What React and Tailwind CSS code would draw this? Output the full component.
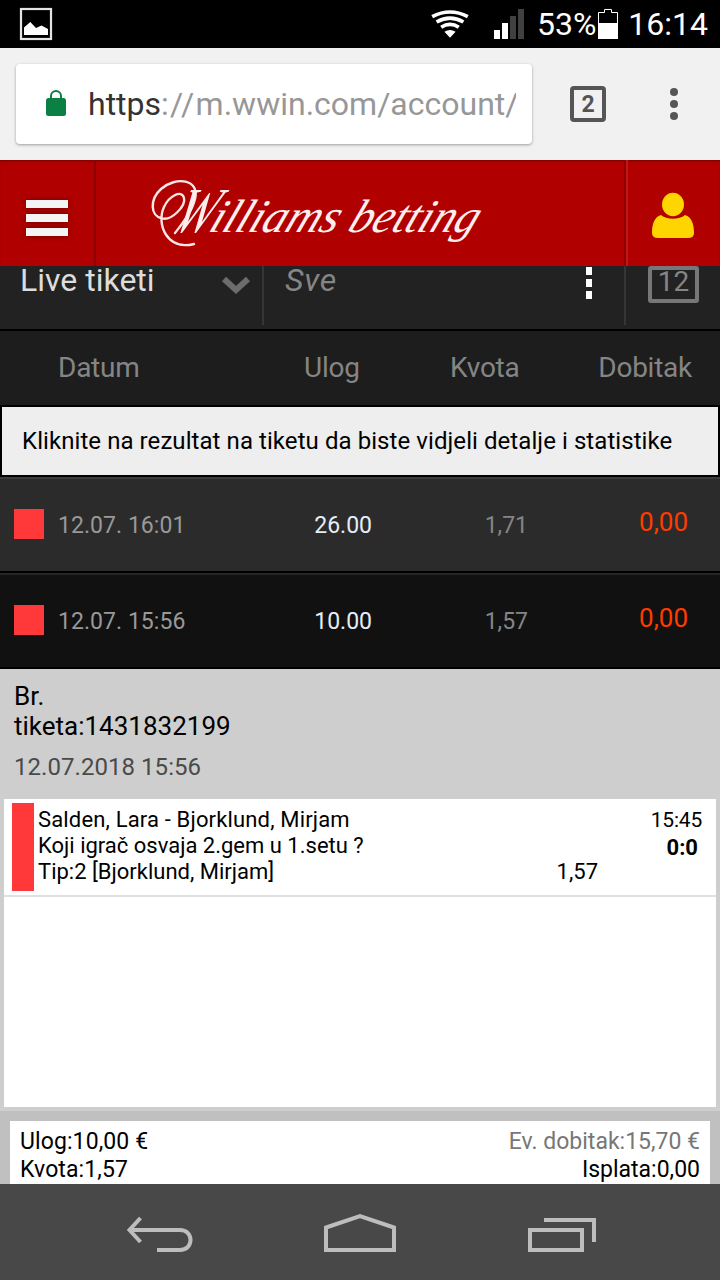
import React from 'react'

const tickets = [
  { id: 1, date: '12.07. 16:01', stake: '26.00', odds: '1,71', payout: '0,00', open: false },
  { id: 2, date: '12.07. 15:56', stake: '10.00', odds: '1,57', payout: '0,00', open: true },
]

const GalleryIcon = () => (
  <svg width="34" height="34" viewBox="0 0 34 34" fill="none">
    <rect x="2" y="2" width="30" height="30" stroke="#e4e4e4" strokeWidth="2.2" />
    <path d="M5 28V20.5L11.3 15L17 21L22.5 18.5L29 22V28Z" fill="#fff" />
  </svg>
)

const WifiIcon = () => (
  <svg width="38" height="28" viewBox="0 0 38 28" fill="none" stroke="#fff" strokeWidth="3.7">
    <path d="M1.2 6.6Q19 -2.6 36.8 6.6" />
    <path d="M5.6 12Q19 4.4 32.4 12" />
    <path d="M10.2 17.2Q19 11.6 27.8 17.2" />
    <path d="M13.4 21.8Q19 18.4 24.6 21.8L19 27.8Z" fill="#fff" stroke="none" />
  </svg>
)

const SignalIcon = () => (
  <svg width="30" height="30" viewBox="0 0 30 30">
    <rect x="0" y="21" width="6" height="9" fill="#fff" />
    <rect x="8" y="14" width="6" height="16" fill="#fff" />
    <rect x="16" y="7" width="6" height="23" fill="#404040" />
    <rect x="24" y="0" width="6" height="30" fill="#404040" />
  </svg>
)

const BatteryIcon = () => (
  <svg width="20" height="30" viewBox="0 0 20 30" fill="none">
    <path d="M.5 29.5V3.5H6.5V.5H13.5V3.5H19.5V29.5Z" stroke="#fff" />
    <rect x="0" y="14" width="20" height="16" fill="#fff" />
  </svg>
)

const LockIcon = () => (
  <svg width="20" height="26" viewBox="0 0 20 26" fill="none">
    <path d="M5 9V6A5 5 0 0 1 15 6V9" stroke="#0b8043" strokeWidth="2" />
    <rect x="0" y="8" width="20" height="18" rx="2.5" fill="#0b8043" />
  </svg>
)

const Logo = () => (
  <svg width="380" height="96" viewBox="0 -6 380 96" fill="none">
    {/* swash around the initial */}
    <path
      d="M12 42C22 46 37 30 35 22C33 13 20 20 15 31C7 48 18 75 45 68M12 42C2 40 0 24 12 13C27 0 51 3 46 23C43 36 33 48 26 57"
      stroke="#fbe4e4" strokeWidth="2.4" strokeLinecap="round"
    />
    <g
      transform="translate(30 56) skewX(-22)" fill="#fdeeee"
      fontFamily="'Liberation Serif', serif" fontStyle="italic"
    >
      <text x="-8" y="0" fontSize="64" textLength="38" lengthAdjust="spacingAndGlyphs">W</text>
      <text x="28" y="0" fontSize="47" textLength="128" lengthAdjust="spacingAndGlyphs">illiams</text>
      <text x="167" y="0" fontSize="47" textLength="128" lengthAdjust="spacingAndGlyphs">betting</text>
    </g>
  </svg>
)

const UserIcon = () => (
  <svg width="44" height="48" viewBox="0 0 44 48" fill="#ffd500">
    <path d="M10 23C3 25 1 33 1 41Q1 46 7 46H37Q43 46 43 41C43 33 41 25 34 23C28 28 16 28 10 23Z" />
    <ellipse cx="22" cy="12.5" rx="11" ry="11.7" />
  </svg>
)

const ChevronIcon = () => (
  <svg width="30" height="20" viewBox="0 0 30 20" fill="none">
    <path d="M3 3L15 14L27 3" stroke="#6c6c6c" strokeWidth="6" />
  </svg>
)

function StatusBar() {
  return (
    <div className="flex h-12 items-center bg-black pl-[19px] pr-3 text-white">
      <GalleryIcon />
      <div className="ml-auto flex items-center">
        <WifiIcon />
        <div className="ml-[25px]"><SignalIcon /></div>
        <span className="ml-[13px] text-[32px] leading-none">53%</span>
        <div className="ml-0.5"><BatteryIcon /></div>
        <span className="ml-2.5 text-[32px] leading-none">16:14</span>
      </div>
    </div>
  )
}

function BrowserBar() {
  return (
    <div className="flex h-28 items-center bg-[#f1f1f1] pl-4">
      <div className="flex h-20 w-[516px] items-center rounded-[4px] bg-white pl-[30px] pr-4 shadow-[0_1px_3px_rgba(0,0,0,0.35)]">
        <div className="-mt-0.5"><LockIcon /></div>
        <div className="ml-[22px] w-[428px] overflow-hidden whitespace-nowrap text-[32px] leading-10 text-[#979797]">
          <span className="text-[#333]">https</span>
          <span className="tracking-[1.3px]">://</span>m.wwin.com/account/
        </div>
      </div>
      <div className="ml-[38px] flex size-9 items-center justify-center rounded-[4px] border-4 border-[#555] text-[23px] font-bold leading-none text-[#555]">
        2
      </div>
      <div className="ml-16 flex flex-col gap-1">
        <i className="size-2 rounded-full bg-[#555]" />
        <i className="size-2 rounded-full bg-[#555]" />
        <i className="size-2 rounded-full bg-[#555]" />
      </div>
    </div>
  )
}

function SiteHeader() {
  return (
    <div className="flex h-[106px] bg-[#b00000] shadow-[inset_0_2px_2px_-1px_rgba(90,0,0,0.6)]">
      <div className="flex w-24 flex-col gap-1.5 border-r-2 border-[#8c0000] pl-[26px] pt-10">
        <i className="h-2 w-[42px] bg-[#f4f4f4] shadow-[0_0_5px_rgba(70,0,0,0.7)]" />
        <i className="h-2 w-[42px] bg-[#f4f4f4] shadow-[0_0_5px_rgba(70,0,0,0.7)]" />
        <i className="h-2 w-[42px] bg-[#f4f4f4] shadow-[0_0_5px_rgba(70,0,0,0.7)]" />
      </div>
      <div className="flex-1 pl-[53px] pt-2.5"><Logo /></div>
      <div className="w-24 border-l-2 border-[#8c0000]">
        <div className="h-full border-l-2 border-[#c81414] pl-[23px] pt-8"><UserIcon /></div>
      </div>
    </div>
  )
}

function FilterBar() {
  return (
    <div className="flex h-[65px] border-b-2 border-black bg-[#222] text-[32px] leading-8">
      <div className="flex h-[59px] w-[264px] justify-between border-r-2 border-[#363636] pl-5 pr-[11px]">
        <span className="-mt-0.5 text-[#ddd]">Live tiketi</span>
        <div className="pt-2.5"><ChevronIcon /></div>
      </div>
      <div className="flex h-[59px] w-[362px] justify-between border-r-2 border-[#363636] pl-[21px] pr-8">
        <span className="-mt-0.5 italic tracking-[0.7px] text-[#858585]">Sve</span>
        <div className="flex flex-col gap-1 pt-px">
          <i className="h-2 w-1.5 bg-white" />
          <i className="h-2 w-1.5 bg-white" />
          <i className="h-2 w-1.5 bg-white" />
        </div>
      </div>
      <div className="ml-[22px] flex h-[37px] w-[51px] items-center justify-center rounded-[3px] border-4 border-[#777] pb-1.5 text-[28px] text-[#858585]">
        12
      </div>
    </div>
  )
}

function TicketRow({ ticket }) {
  return (
    <div
      className={
        'flex h-24 items-center border-b-2 border-t-2 border-b-black pl-3.5 pr-8 text-[23px] leading-none ' +
        (ticket.open ? 'border-t-[#262626] bg-[#111]' : 'border-t-[#3c3c3c] bg-[#2b2b2b]')
      }
    >
      <div className="mb-[3px] size-[30px] bg-[#ff3939]" />
      <div className="ml-3.5 w-[227px] tracking-[0.05px] text-[#999]">{ticket.date}</div>
      <div className="w-[87px] text-right text-[#e6edf8]">{ticket.stake}</div>
      <div className="w-[156px] text-right text-[#858585]">{ticket.odds}</div>
      <div className="mb-1.5 flex-1 text-right text-[26px] leading-none text-[#ff3b00]">{ticket.payout}</div>
    </div>
  )
}

function TicketDetails() {
  return (
    <div className="h-[442px] bg-[#cecece] px-1 pt-3">
      <div className="px-2.5 text-[26px] leading-[30px] text-black">
        <div>Br.</div>
        <div>tiketa:1431832199</div>
      </div>
      <div className="mt-3 px-2.5 text-2xl leading-[28px] tracking-[0.05px] text-[#4a4a4a]">12.07.2018 15:56</div>
      <div className="mt-[18px] h-[308px] bg-white text-[22px] leading-[26px] text-black">
        <div className="flex h-[98px] border-b-2 border-[#e0e0e0] pl-2 pt-1">
          <div className="h-[88px] w-[22px] bg-[#ff3939]" />
          <div className="ml-1 pt-1">
            <div className="tracking-[0.16px]">Salden, Lara - Bjorklund, Mirjam</div>
            <div>Koji igrač osvaja 2.gem u 1.setu ?</div>
            <div>Tip:2 [Bjorklund, Mirjam]</div>
          </div>
          <div className="ml-auto pt-14">1,57</div>
          <div className="w-[118px] pr-3.5 pt-1 text-right leading-[27px]">
            <div className="text-[21px] tracking-[-0.2px]">15:45</div>
            <div className="pr-1 font-bold">0:0</div>
          </div>
        </div>
      </div>
    </div>
  )
}

function Summary() {
  return (
    <div className="h-[73px] overflow-hidden bg-[#c0c0c0] px-2.5 pt-2.5">
      <div className="flex h-[63px] justify-between bg-white px-2.5 pt-[7px] text-[23px] leading-7 text-black">
        <div>
          <div className="tracking-[0.1px]">Ulog:10,00 €</div>
          <div className="tracking-[0.1px]">Kvota:1,57</div>
        </div>
        <div className="text-right">
          <div className="text-[#777]">Ev. dobitak:15,70 €</div>
          <div>Isplata:0,00</div>
        </div>
      </div>
    </div>
  )
}

function NavBar() {
  return (
    <div className="flex h-24 bg-[#484849] pl-[126px] pt-[29px]">
      <svg width="68" height="40" viewBox="0 0 68 40" fill="none" stroke="#bdbdbd" strokeWidth="4">
        <path d="M4 17H54C68 17 68 37 54 37H31" />
        <path d="M14.5 5L3.5 17L14.5 29" />
      </svg>
      <svg className="ml-[129px]" width="74" height="40" viewBox="0 0 74 40" fill="none" stroke="#bdbdbd" strokeWidth="4">
        <path d="M3 37V14.5L37 3L71 14.5V37Z" />
      </svg>
      <svg className="ml-[131px]" width="68" height="40" viewBox="0 0 68 40" fill="none" stroke="#bdbdbd" strokeWidth="4">
        <rect x="2" y="17" width="52" height="20" />
        <path d="M16 7H66V29" />
      </svg>
    </div>
  )
}

export default function App() {
  return (
    <div className="h-[1280px] w-[720px] overflow-hidden bg-black font-['Roboto',sans-serif]">
      <StatusBar />
      <BrowserBar />
      <SiteHeader />
      <FilterBar />
      <div className="flex h-[76px] items-center border-b-2 border-black bg-[#1d1d1d] pl-[58px] pr-7 text-[28px] leading-none tracking-[-0.25px] text-[#858585]">
        <div className="w-[246px]">Datum</div>
        <div className="w-[146px]">Ulog</div>
        <div>Kvota</div>
        <div className="ml-auto">Dobitak</div>
      </div>
      <div className="flex h-[70px] items-center border-x-2 border-b-2 border-black bg-[#eee] pl-5 text-2xl leading-none tracking-[0.07px] text-black">
        Kliknite na rezultat na tiketu da biste vidjeli detalje i statistike
      </div>
      {tickets.map(t => <TicketRow key={t.id} ticket={t} />)}
      <TicketDetails />
      <Summary />
      <NavBar />
    </div>
  )
}
